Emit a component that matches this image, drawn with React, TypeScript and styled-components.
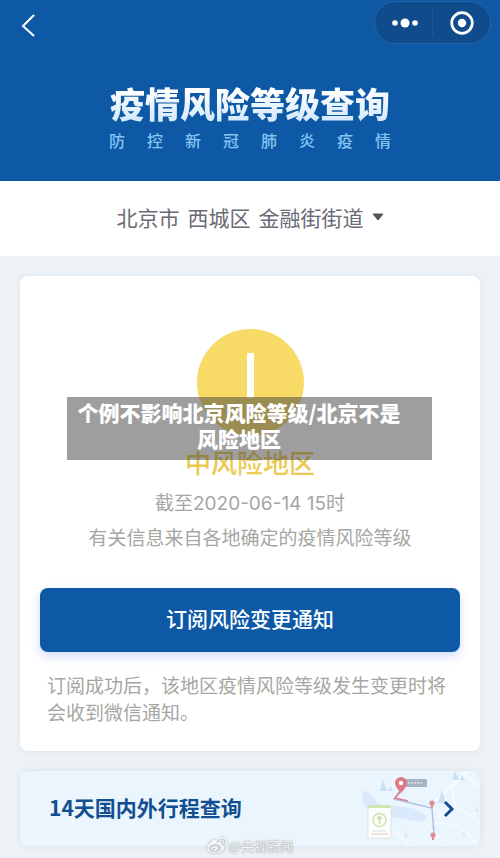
import React from 'react';
import styled, { createGlobalStyle } from 'styled-components';
import { FaWeibo } from 'react-icons/fa';

const BLUE = '#0e59a5';

const GlobalStyle = createGlobalStyle`
  * { box-sizing: border-box; }
  body {
    margin: 0;
    background: #edf2f6;
    font-family: "Noto Sans CJK SC", sans-serif;
  }
  button { font-family: inherit; border: 0; cursor: pointer; }
  h1, h2, p { margin: 0; }
`;

const Page = styled.div`
  position: relative;
  padding-bottom: 12px;
  overflow: hidden;
`;

const Header = styled.header`
  height: 181px;
  background: ${BLUE};
`;

const NavBar = styled.nav`
  display: flex;
  justify-content: space-between;
  align-items: flex-start;
  padding: 1px 9px 0 14px;
`;

const BackButton = styled.button`
  display: flex;
  margin-top: 10px;
  padding: 0;
  background: none;
  color: #fff;
`;

const Capsule = styled.div`
  display: flex;
  align-items: center;
  width: 117px;
  height: 43px;
  border: 1px solid #2563a5;
  border-radius: 22px;
  background: #104c8b;
`;

const CapsuleButton = styled.button`
  display: flex;
  flex: 1;
  justify-content: center;
  padding: 0;
  background: none;
  color: #fff;

  & + & { border-left: 1px solid #1c5797; }
`;

const Banner = styled.div`
  width: 282px;
  margin: 39px auto 0;
`;

const Title = styled.h1`
  font-size: 35px;
  line-height: 40px;
  font-weight: 900;
  text-align: center;
  white-space: nowrap;
  color: transparent;
  background: linear-gradient(#ffffff 20%, #d6eafd 90%);
  background-clip: text;
`;

const Subtitle = styled.p`
  margin-top: 5px;
  font-size: 16px;
  line-height: 24px;
  font-weight: 500;
  color: #84c5f4;
  text-align: justify;
  text-align-last: justify;
`;

const LocationBar = styled.div`
  display: flex;
  justify-content: center;
  height: 75px;
  padding-bottom: 4px;
  background: #fff;
`;

const LocationButton = styled.button`
  display: flex;
  align-items: center;
  gap: 8px;
  padding: 0;
  background: none;
  color: #6a6a74;
  font-size: 21px;
  font-weight: 400;
`;

const Main = styled.main`
  display: grid;
  gap: 20px;
  padding: 20px 20px 0;
`;

const StatusCard = styled.section`
  position: relative;
  padding: 53px 20px 26px;
  border-radius: 8px;
  background: #fff;
  box-shadow: 0 0 6px rgba(80, 110, 140, 0.1);
  text-align: center;
`;

const WarningIcon = styled.svg`
  display: block;
  margin: 0 auto;
`;

const Level = styled.h2`
  margin-top: 8px;
  color: #ebca52;
  font-size: 26px;
  line-height: 36px;
  font-weight: 500;
`;

const Info = styled.p`
  margin-top: 6px;
  color: #a6a6a2;
  font-size: 19px;
  line-height: 27px;
  font-weight: 400;
  white-space: nowrap;
`;

const Stamp = styled(Info)`
  margin-top: 10px;
  font-family: Inter, "Noto Sans CJK SC", sans-serif;
`;

const SubscribeButton = styled.button`
  display: block;
  width: 100%;
  height: 64px;
  margin-top: 38px;
  padding: 0 0 4px;
  border-radius: 8px;
  background: ${BLUE};
  box-shadow: 0 4px 10px rgba(60, 110, 230, 0.25);
  color: #fff;
  font-size: 21px;
  font-weight: 500;
`;

const Note = styled.p`
  margin-top: 19px;
  padding-left: 7px;
  color: #a6a6a2;
  font-size: 19px;
  line-height: 27px;
  font-weight: 400;
  text-align: left;
`;

const Caption = styled.div`
  position: absolute;
  top: 121px;
  left: 47px;
  right: 48px;
  padding: 2px 25px 9px 4px;
  background: rgba(62, 62, 62, 0.5);
  color: #fff;
  font-size: 21px;
  line-height: 26px;
  font-weight: 900;
`;

const TripLink = styled.a`
  display: flex;
  align-items: center;
  justify-content: space-between;
  height: 75px;
  padding-left: 29px;
  border-radius: 8px;
  overflow: hidden;
  background: #ebf5fe;
  box-shadow: 0 0 6px rgba(80, 110, 140, 0.12);
  color: #124f92;
  font-size: 21px;
  line-height: 30px;
  font-weight: 700;
  text-decoration: none;
`;

const TripLabel = styled.span`
  padding-bottom: 3px;
`;

const Watermark = styled.div`
  position: absolute;
  bottom: 2px;
  left: 0;
  right: 0;
  display: flex;
  align-items: center;
  justify-content: center;
  gap: 2px;
  color: #f3f6f8;
  font-size: 13px;
  line-height: 20px;
  text-shadow: 0 0 1px #999, 0 0 2px #aaa;

  svg { filter: drop-shadow(0 0 1px #999); }
`;

function TripMap() {
  return (
    <svg width="124" height="75" viewBox="0 0 124 75" fill="none" aria-hidden="true">
      <path d="M6 20Q15 19 22 33L55 37Q72 42 69 48Q66 52 48 48L15 43Q6 36 6 20Z" fill="#dae9fb" />
      <g stroke="#f4faff" strokeWidth="2">
        <path d="M75 34L111 0M82 46L99 35L124 51M99 35L96 16L110 4L124 17M80 52Q103 50 122 75M36 58L54 75M70 53L91 75M85 25L104 42" />
      </g>
      <g fill="#cbe0f3">
        <path d="M27 8L31 20H24ZM34 15L37 20H32ZM99 0L103 9H96ZM106 4L109 9H104ZM86 19L90 32H82Z" />
        <path d="M50 60L52 66H48ZM78 53L80 58H76ZM108 60L110 65H106ZM121 36L123 41H119Z" opacity=".5" />
      </g>
      <rect x="42" y="8" width="29" height="8" rx="1" fill="#a6b4c4" />
      <path d="M52 12H67" stroke="#cbd6e1" strokeWidth="2" strokeDasharray="2 1" />
      <path d="M44 20L38 28L76 37L78 64" stroke="#b3c0dc" strokeWidth="1.500" />
      <path d="M45 20L39 27L52 30" stroke="#de828d" strokeWidth="1.700" />
      <path d="M45 22Q39 16 39 12A6 6 0 0 1 51 12Q51 16 45 22Z" fill="#dc7b86" />
      <circle cx="45" cy="12" r="2.200" fill="#fff" />
      <path d="M76 33V37M77 65V69" stroke="#dd8d97" strokeWidth="2" />
      <circle cx="76" cy="32" r="2.600" fill="#dd8d97" />
      <circle cx="77" cy="64" r="2.600" fill="#dd8d97" />
      <rect x="12" y="35" width="23" height="32" rx="2" fill="#fbfefa" stroke="#dbe6e4" />
      <path d="M12 37Q12 34 14 34H33Q35 34 35 37Z" fill="#cfe6b3" />
      <circle cx="23.500" cy="49" r="6.500" stroke="#cfe3b4" strokeWidth="1.500" />
      <path d="M23.500 53V46M21 48L23.500 45.500L26 48" stroke="#c3dba3" strokeWidth="1.500" />
      <path d="M17 60H30" stroke="#d5dada" />
      <path d="M15 63H32" stroke="#e6c5c8" />
      <path d="M89 31L96 38L89 45" stroke="#124f92" strokeWidth="3" />
    </svg>
  );
}

export default function App() {
  return (
    <Page>
      <GlobalStyle />
      <Header>
        <NavBar>
          <BackButton aria-label="返回">
            <svg width="28" height="30" viewBox="0 0 28 30" fill="none" stroke="currentColor" strokeWidth="2">
              <path d="M20 4L9 15L20 25" />
            </svg>
          </BackButton>
          <Capsule>
            <CapsuleButton aria-label="更多">
              <svg width="28" height="26" viewBox="0 0 28 26" fill="currentColor">
                <circle cx="5" cy="13" r="2.800" />
                <circle cx="15" cy="13" r="4.500" />
                <circle cx="25" cy="13" r="2.800" />
              </svg>
            </CapsuleButton>
            <CapsuleButton aria-label="关闭">
              <svg width="26" height="26" viewBox="0 0 26 26">
                <circle cx="13" cy="13" r="10.300" fill="none" stroke="currentColor" strokeWidth="2.700" />
                <circle cx="13" cy="13" r="4.200" fill="currentColor" />
              </svg>
            </CapsuleButton>
          </Capsule>
        </NavBar>
        <Banner>
          <Title>疫情风险等级查询</Title>
          <Subtitle>防 控 新 冠 肺 炎 疫 情</Subtitle>
        </Banner>
      </Header>
      <LocationBar>
        <LocationButton>
          <span>北京市</span>
          <span>西城区</span>
          <span>金融街街道</span>
          <svg width="12" height="8" viewBox="0 0 12 8" aria-hidden="true">
            <path d="M1 1H11L6 7Z" fill="#55555f" stroke="#55555f" strokeLinejoin="round" />
          </svg>
        </LocationButton>
      </LocationBar>
      <Main>
        <StatusCard>
          <WarningIcon width="107" height="107" viewBox="0 0 107 107" aria-hidden="true">
            <circle cx="53.500" cy="53.500" r="53.500" fill="#f8da67" />
            <path d="M50 24H57V69H50ZM50 76H57V83H50Z" fill="#fff" />
          </WarningIcon>
          <Level>中风险地区</Level>
          <Stamp>截至2020-06-14 15时</Stamp>
          <Info>有关信息来自各地确定的疫情风险等级</Info>
          <SubscribeButton>订阅风险变更通知</SubscribeButton>
          <Note>订阅成功后，该地区疫情风险等级发生变更时将会收到微信通知。</Note>
          <Caption>个例不影响北京风险等级/北京不是风险地区</Caption>
        </StatusCard>
        <TripLink href="#trip">
          <TripLabel>14天国内外行程查询</TripLabel>
          <TripMap />
        </TripLink>
      </Main>
      <Watermark>
        <FaWeibo size={20} />
        <span>@央视新闻</span>
      </Watermark>
    </Page>
  );
}
